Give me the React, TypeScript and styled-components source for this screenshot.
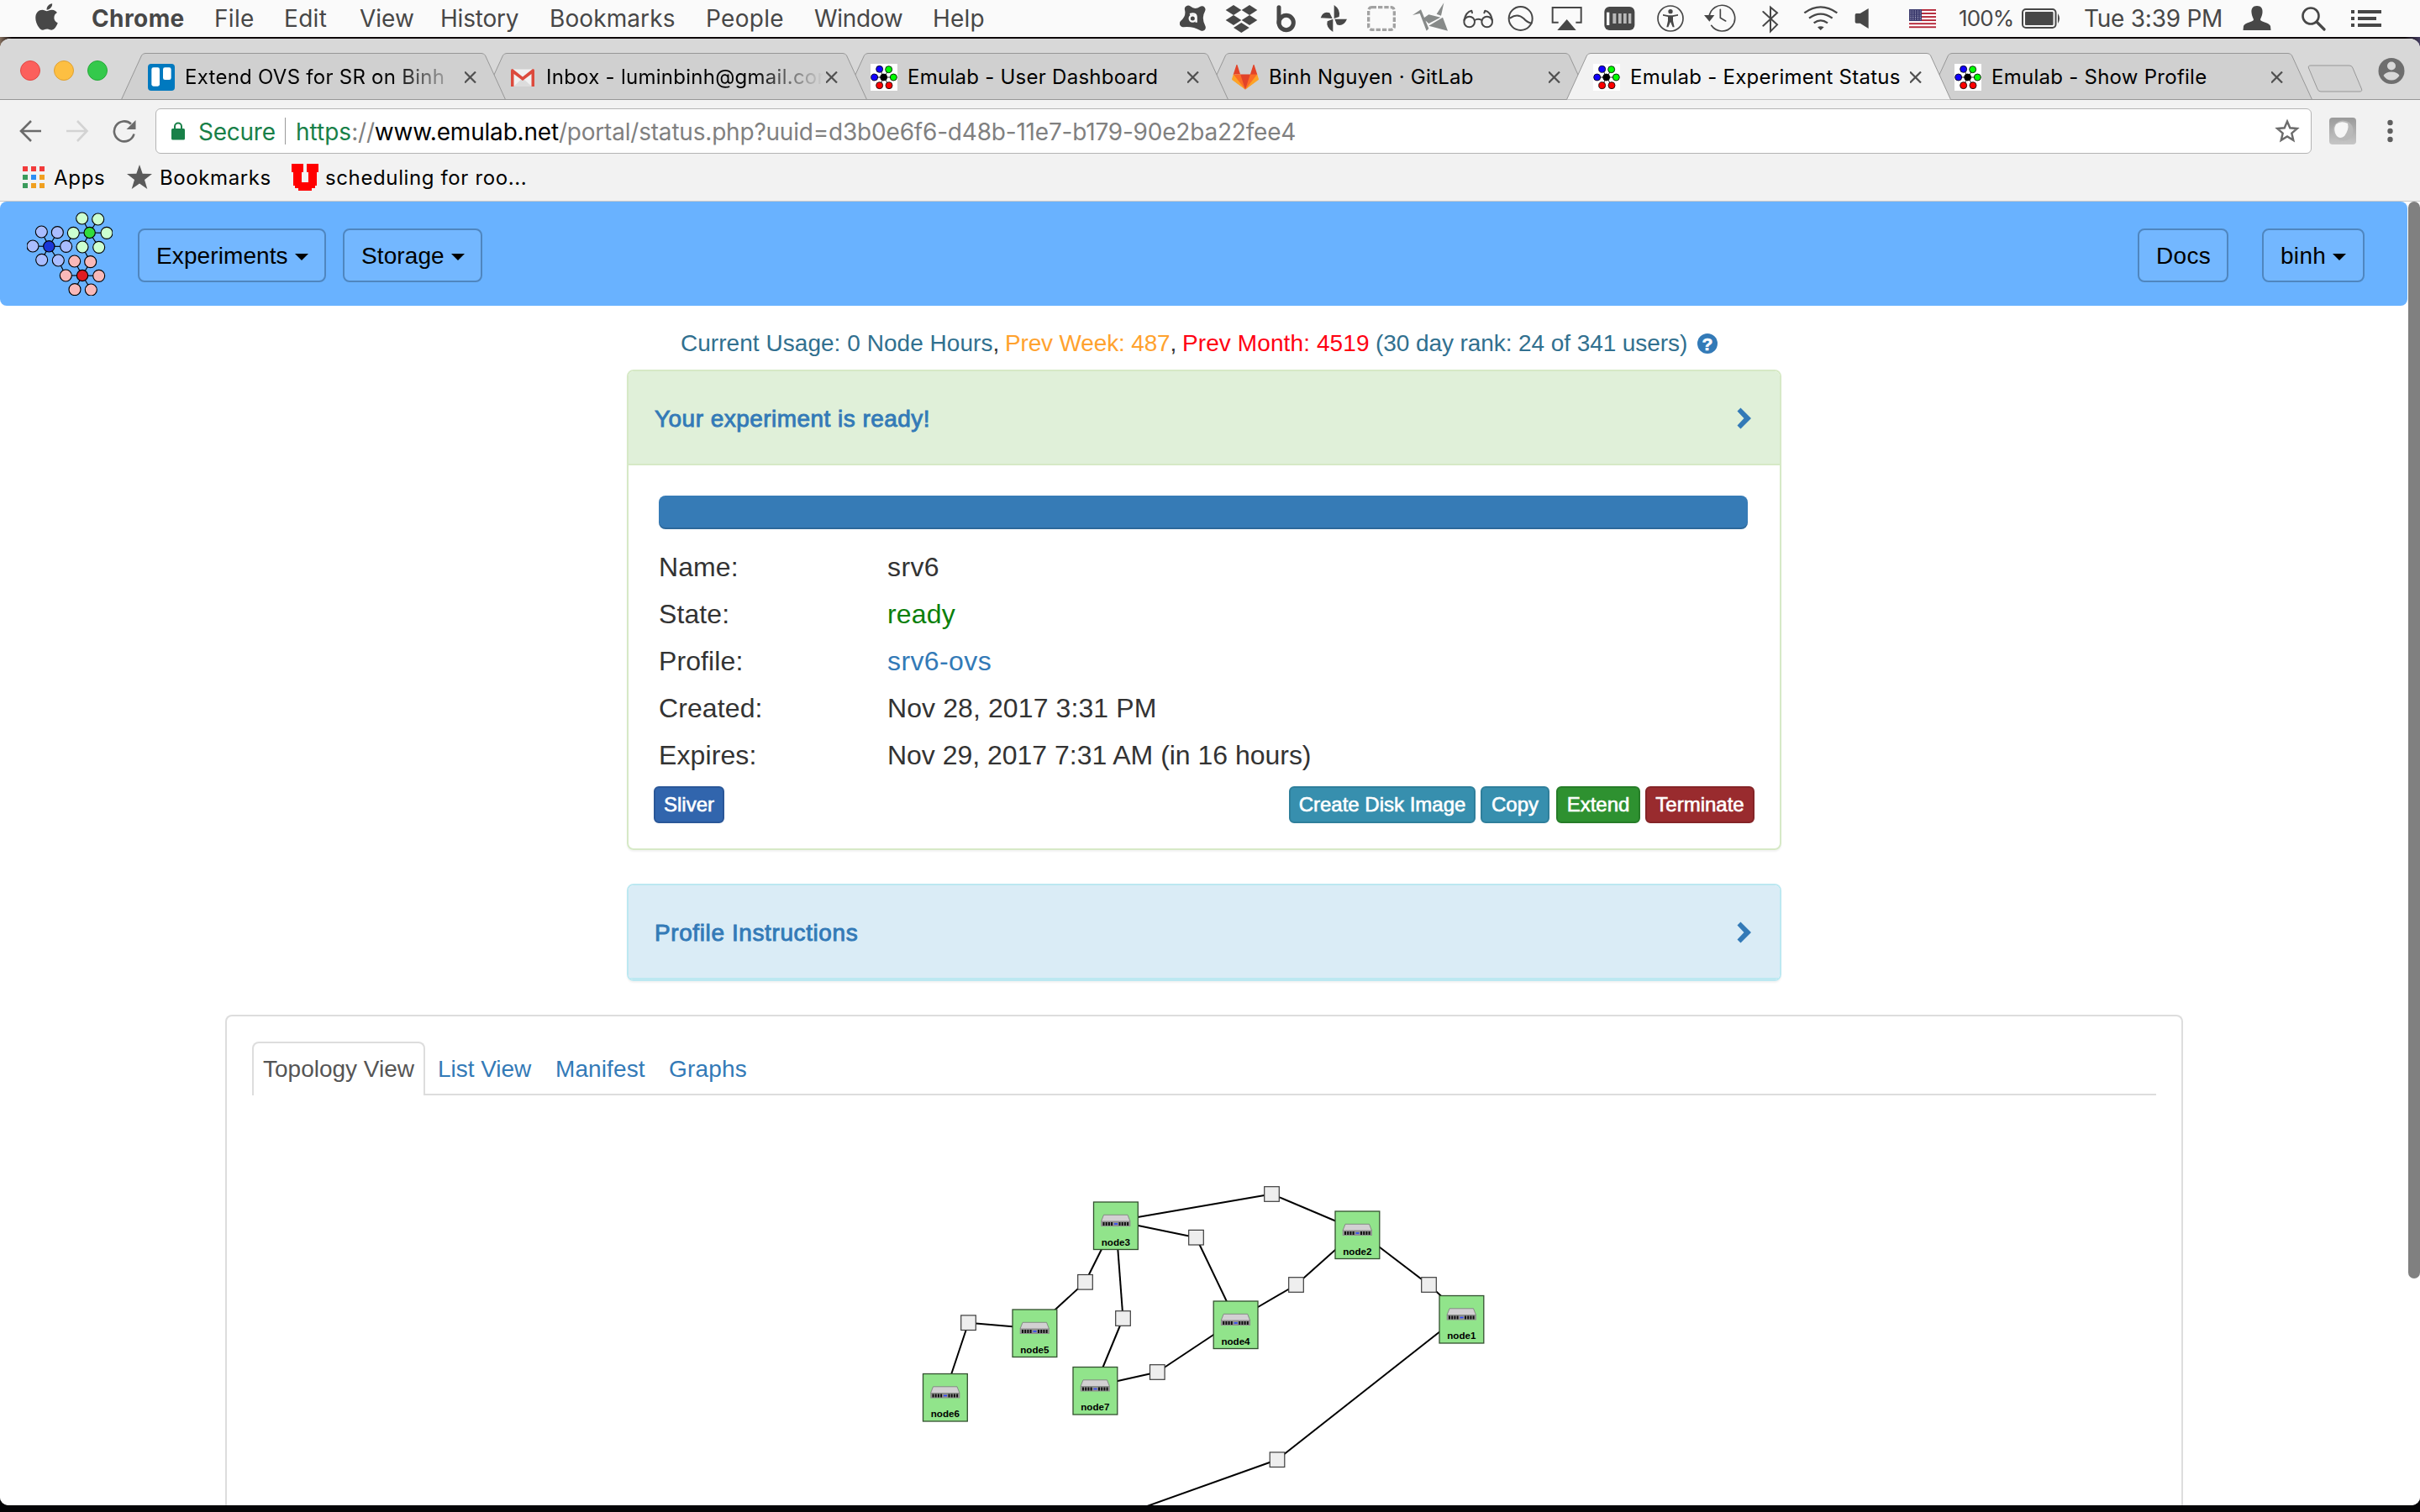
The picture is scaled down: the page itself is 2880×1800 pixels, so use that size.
import React from "react";
import styled, { createGlobalStyle, css } from "styled-components";
import { FaApple } from "react-icons/fa";

const Global = createGlobalStyle`
  * { box-sizing: border-box; }
  html, body { margin: 0; padding: 0; background: #050507; }
  body { width: 2880px; height: 1800px; overflow: hidden; }
  svg { display: block; flex: none; }
`;

const ui = `Inter, Roboto, "Liberation Sans", sans-serif`;
const page = `"Liberation Sans", Arial, Helvetica, sans-serif`;
const ink = "#474747";

/* ---------- desktop ---------- */

const Desktop = styled.div`
  display: flex;
  flex-direction: column;
  width: 2880px;
  height: 1800px;
  padding-bottom: 8px;
  overflow: hidden;
  background: linear-gradient(90deg, #85705f 0, #0c0608 14px, #0c0608 2862px, #453d60 2880px) 0 44px / 100% 20px no-repeat, #050507;
`;

const MenuBar = styled.header`
  flex: none;
  display: flex;
  align-items: center;
  height: 44px;
  margin-bottom: 2px;
  background: #fafafa;
  color: ${ink};
  font: 28px/44px ${ui};
`;

const AppleMark = styled(FaApple)`
  width: 27px;
  height: 36px;
  margin: 0 40px 4px 42px;
  flex: none;
`;

const MenuItem = styled.span<{ $w: number; $bold?: boolean; $ls?: number }>`
  flex: none;
  width: ${(p) => p.$w}px;
  height: 44px;
  white-space: nowrap;
  letter-spacing: ${(p) => p.$ls ?? 0}px;
  font-weight: ${(p) => (p.$bold ? 700 : 400)};
`;

const StatusIcon = styled.svg<{ $gap: number }>`
  margin-left: ${(p) => p.$gap}px;
  height: 44px;
`;

const StatusText = styled.span<{ $gap: number; $w: number; $size: number; $ls: number }>`
  flex: none;
  margin-left: ${(p) => p.$gap}px;
  width: ${(p) => p.$w}px;
  font-size: ${(p) => p.$size}px;
  letter-spacing: ${(p) => p.$ls}px;
  white-space: nowrap;
`;

/* ---------- browser window ---------- */

const BrowserWindow = styled.div`
  flex: 1;
  min-height: 0;
  display: flex;
  flex-direction: column;
  border-radius: 12px 12px 10px 10px;
  overflow: hidden;
  background: #fff;
`;

const TabStrip = styled.div`
  flex: none;
  display: flex;
  align-items: flex-end;
  height: 73px;
  background: #d8d8d8;
  box-shadow: inset 0 -1px 0 #979797;
`;

const Lights = styled.div`
  display: flex;
  gap: 16px;
  width: 144px;
  padding: 0 0 23px 24px;
`;

const Light = styled.i<{ $fill: string; $edge: string }>`
  width: 24px;
  height: 24px;
  border-radius: 50%;
  background: ${(p) => p.$fill};
  border: 1px solid ${(p) => p.$edge};
`;

const TabBox = styled.div<{ $z: number }>`
  position: relative;
  z-index: ${(p) => p.$z};
  flex: none;
  display: flex;
  align-items: center;
  width: 458px;
  height: 56px;
  margin-right: -28px;
  padding: 1px 0 0 32px;
`;

const TabShape = styled.svg`
  position: absolute;
  left: 0;
  top: 0;
  z-index: -1;
`;

const TabTitle = styled.span<{ $fade?: boolean }>`
  flex: none;
  width: 355px;
  margin: 0 -22px 0 12px;
  overflow: hidden;
  white-space: nowrap;
  color: #000;
  font: 24px/36px ${ui};
  letter-spacing: 0.26px;
  ${(p) => p.$fade && css`mask-image: linear-gradient(90deg, #000 247px, transparent 330px);`}
`;

const Toolbar = styled.div`
  flex: none;
  display: flex;
  align-items: center;
  height: 74px;
  padding-left: 23px;
  background: #f2f2f2;
`;

const NavIcon = styled.svg<{ $gap?: number }>`
  margin-left: ${(p) => p.$gap ?? 0}px;
`;

const AddressBar = styled.div`
  flex: none;
  display: flex;
  align-items: center;
  width: 2566px;
  height: 54px;
  margin-left: 23px;
  padding-left: 18px;
  border: 1px solid #b4b4b4;
  border-radius: 6px;
  background: #fff;
  font: 28px/32px ${ui};
`;

const Secure = styled.span`
  width: 103px;
  margin: 2px 0 0 16px;
  letter-spacing: -0.25px;
  color: #188048;
`;

const Divider = styled.i`
  width: 1px;
  height: 32px;
  background: #9b9b9b;
`;

const Url = styled.span`
  flex: 1;
  margin: 2px 0 0 12px;
  letter-spacing: -0.2px;
  color: #808080;
  white-space: nowrap;
  b { font-weight: 400; color: #000; }
  em { font-style: normal; color: #188048; letter-spacing: 0; }
`;

const BookmarksBar = styled.div`
  flex: none;
  display: flex;
  align-items: center;
  height: 47px;
  padding: 0 0 11px 27px;
  background: #f2f2f2;
  border-bottom: 1px solid #c9c9c9;
  color: #000;
  font: 24px/32px ${ui};
`;

const Bookmark = styled.span<{ $w: number; $gap: number; $ls: number }>`
  flex: none;
  width: ${(p) => p.$w}px;
  margin: 3px 0 0 ${(p) => p.$gap}px;
  letter-spacing: ${(p) => p.$ls}px;
  white-space: nowrap;
`;

/* ---------- web page ---------- */

const Viewport = styled.div`
  flex: 1;
  min-height: 0;
  display: flex;
  background: #fff;
  font-family: ${page};
`;

const Content = styled.main`
  width: 2866px;
  display: flex;
  flex-direction: column;
`;

const ScrollThumb = styled.div`
  width: 14px;
  height: 1282px;
  border-radius: 7px;
  background: #808080;
`;

const NavBar = styled.nav`
  flex: none;
  display: flex;
  align-items: center;
  height: 124px;
  width: 2865px;
  padding: 4px 51px 0 32px;
  border-radius: 8px;
  background: #69b2ff;
`;

const Logo = styled.svg`
  margin-bottom: 4px;
`;

const NavButton = styled.button<{ $w: number; $gap: string; $ls?: number }>`
  display: flex;
  align-items: center;
  gap: 8px;
  width: ${(p) => p.$w}px;
  height: 64px;
  margin-left: ${(p) => p.$gap};
  padding: 1px 0 0 20px;
  border: 2px solid #4f86bf;
  border-radius: 8px;
  background: #73b7ff;
  color: #000;
  font: 28px/32px ${page};
  letter-spacing: ${(p) => p.$ls ?? 0}px;
`;

const Caret = styled.i`
  margin-top: 3px;
  border: 8px solid transparent;
  border-top-color: #000;
  border-bottom: 0;
`;

const Usage = styled.p`
  flex: none;
  display: flex;
  align-items: center;
  height: 40px;
  margin: 25px 0 11px;
  padding-left: 810px;
  color: #333;
  font-size: 28px;
  line-height: 40px;
  white-space: nowrap;
`;

const UsagePart = styled.span<{ $c: string; $w: number; $ls?: number }>`
  width: ${(p) => p.$w}px;
  color: ${(p) => p.$c};
  letter-spacing: ${(p) => p.$ls ?? 0}px;
  i { font-style: normal; color: #333; }
`;

const HelpBadge = styled.span`
  width: 24px;
  height: 24px;
  border-radius: 50%;
  background: #337ab7;
  color: #fff;
  font: bold 21px/25px ${page};
  text-align: center;
  -webkit-text-stroke: 0.6px #fff;
`;

const Panel = styled.section<{ $edge: string; $h: number }>`
  flex: none;
  width: 1374px;
  height: ${(p) => p.$h}px;
  margin: 0 0 40px 746px;
  border: 2px solid ${(p) => p.$edge};
  border-radius: 8px;
  box-shadow: 0 2px 2px rgba(0, 0, 0, 0.05);
  overflow: hidden;
`;

const PanelHeading = styled.div<{ $bg: string; $edge: string }>`
  display: flex;
  align-items: center;
  justify-content: space-between;
  height: 112px;
  padding: 2px 33px 0 31px;
  background: ${(p) => p.$bg};
  border-bottom: 2px solid ${(p) => p.$edge};
`;

const PanelTitle = styled.h5<{ $ls: number }>`
  margin: 1px 0 0;
  color: #337ab7;
  font: 28px/32px ${page};
  letter-spacing: ${(p) => p.$ls}px;
  -webkit-text-stroke: 0.9px #337ab7;
`;

const Progress = styled.div`
  height: 40px;
  margin: 36px 38px 17px 36px;
  border-radius: 8px;
  background: #367bb6;
  box-shadow: inset 0 -2px 0 rgba(0, 0, 0, 0.15);
`;

const Details = styled.dl`
  display: grid;
  grid-template-columns: 272px 1fr;
  grid-auto-rows: 56px;
  margin: 0;
  padding-left: 36px;
  color: #333;
  font-size: 32px;
  line-height: 56px;
`;

const Term = styled.dt`
  letter-spacing: 0.1px;
`;

const Value = styled.dd<{ $c?: string; $ls?: number }>`
  margin: 0;
  color: ${(p) => p.$c ?? "#333"};
  letter-spacing: ${(p) => p.$ls ?? 0}px;
`;

const Actions = styled.div`
  display: flex;
  margin: 9px 30px 0;
`;

const ActionButton = styled.button<{ $bg: string; $edge: string; $w: number; $gap?: string }>`
  width: ${(p) => p.$w}px;
  height: 44px;
  margin-left: ${(p) => p.$gap ?? "0"};
  padding: 0;
  border: 2px solid ${(p) => p.$edge};
  border-radius: 6px;
  background: ${(p) => p.$bg};
  color: #fff;
  font: 24px/40px ${page};
  white-space: nowrap;
  -webkit-text-stroke: 0.6px #fff;
`;

const TopologyPanel = styled.section`
  flex: 1;
  min-height: 0;
  display: flex;
  flex-direction: column;
  width: 2330px;
  margin-left: 268px;
  border: 2px solid #ddd;
  border-bottom: 0;
  border-radius: 8px 8px 0 0;
`;

const ViewTabs = styled.div`
  flex: none;
  display: flex;
  height: 64px;
  margin: 30px 30px 0;
  box-shadow: inset 0 -2px 0 #ddd;
`;

const ViewTab = styled.a<{ $w: number; $active?: boolean; $ls?: number }>`
  width: ${(p) => p.$w}px;
  padding-left: 13px;
  color: #337ab7;
  border: 2px solid transparent;
  font-size: 28px;
  line-height: 61px;
  letter-spacing: ${(p) => p.$ls ?? 0}px;
  white-space: nowrap;
  ${(p) =>
    p.$active &&
    css`
      padding-left: 11px;
      color: #555;
      background: #fff;
      border-color: #ddd #ddd transparent;
      border-bottom: 0;
      border-radius: 8px 8px 0 0;
    `}
`;

/* ---------- drawings ---------- */

const menus = [
  { t: "Chrome", w: 146, bold: true, ls: 0.4 },
  { t: "File", w: 83, ls: 0.3 },
  { t: "Edit", w: 90, ls: 0.3 },
  { t: "View", w: 96, ls: 0 },
  { t: "History", w: 130, ls: -0.2 },
  { t: "Bookmarks", w: 186, ls: 0.1 },
  { t: "People", w: 129, ls: 0.3 },
  { t: "Window", w: 141, ls: -0.3 },
  { t: "Help", w: 294, ls: 0.2 },
];

/* Status icons are drawn at three units per pixel, 132 units tall. */
const Icon = ({ gap, x, w, children }: { gap: number; x: number; w: number; children: React.ReactNode }) => (
  <StatusIcon $gap={gap} width={w / 3} viewBox={`${x} 0 ${w} 132`} fill={ink} stroke="none">
    {children}
  </StatusIcon>
);

const outline = { fill: "none", stroke: ink, strokeLinecap: "round" as const, strokeLinejoin: "round" as const };

const StatusIcons = () => (
  <>
    <Icon gap={0} x={42} w={99}>
      <path d="M72 32Q95 52 121 34Q104 64 122 98Q92 80 54 84Q80 62 72 32Z" stroke={ink} strokeWidth="25" strokeLinejoin="round" />
      <circle cx="88" cy="66" r="11" fill="none" stroke="#fafafa" strokeWidth="7" />
      <path d="M78 51Q101 44 101 62V80" fill="none" stroke="#fafafa" strokeWidth="7" />
    </Icon>
    <Icon gap={21} x={206} w={117}>
      {[[236, 36], [293, 36], [236, 72], [293, 72], [264, 99]].map(([x, y]) => (
        <path key={`${x}${y}`} d={`M${x - 28} ${y}L${x} ${y - 18}L${x + 28} ${y}L${x} ${y + 18}Z`} />
      ))}
    </Icon>
    <Icon gap={22} x={388} w={72}>
      <circle cx="423" cy="81" r="26" {...outline} strokeWidth="15" />
      <path d="M397 26V82" {...outline} strokeWidth="15" />
    </Icon>
    <Icon gap={28} x={546} w={99}>
      <path d="M596 18Q620 34 614 60L596 66ZM548 64Q556 38 580 46L590 66ZM592 114Q566 98 572 76L592 68ZM642 68Q630 96 606 88L598 68Z" />
    </Icon>
    <Icon gap={22} x={711} w={108}>
      <rect x="719" y="26" width="92" height="80" rx="12" fill="none" stroke="#a2a2a2" strokeWidth="10" strokeDasharray="16 6" />
    </Icon>
    <Icon gap={19} x={876} w={126}>
      <path d="M876 54L906 34L934 102L926 110L902 48ZM988 10L962 50L978 56ZM914 66L934 52L976 62L934 84ZM934 92L984 62L1002 110Z" fill="#878a89" />
    </Icon>
    <Icon gap={17} x={1054} w={117}>
      <g {...outline} strokeWidth="6">
        <circle cx="1080" cy="78" r="19" />
        <circle cx="1143" cy="78" r="19" />
        <path d="M1099 72Q1111 64 1124 72M1061 72Q1068 42 1088 38L1090 46M1162 72Q1156 42 1136 38L1133 46" />
      </g>
    </Icon>
    <Icon gap={15} x={1216} w={96}>
      <g {...outline} strokeWidth="6">
        <circle cx="1263" cy="66" r="42" />
        <path d="M1226 64Q1252 46 1274 66Q1286 80 1302 83" />
      </g>
    </Icon>
    <Icon gap={20} x={1372} w={114}>
      <path d="M1398 80H1377V27H1479V80H1460" {...outline} strokeLinecap="butt" strokeLinejoin="miter" strokeWidth="6" />
      <path d="M1428 69L1461 108H1394Z" />
    </Icon>
    <Icon gap={25} x={-1} w={111}>
      <rect x="0" y="24" width="108" height="84" rx="18" />
      <path d="M8 44H18V90H8Z" fill="#fafafa" />
      <path d="M30 48H42V84H30ZM50 48H61V84H50ZM68 48H79V84H68ZM86 48H96V84H86Z" fill="#b8b8b8" />
    </Icon>
    <Icon gap={26} x={186} w={99}>
      <circle cx="234" cy="66" r="45" {...outline} strokeWidth="5" />
      <circle cx="234" cy="41" r="8" />
      <path d="M207 51L227 55H241L261 51V56L243 60V74L248 97H242L234 78L226 97H220L225 74V60L207 56Z" />
    </Icon>
    <Icon gap={23} x={354} w={114}>
      <path d="M372 62A46 46 0 1 1 380 91" {...outline} strokeWidth="5" />
      <path d="M354 54H391L373 77Z" />
      <path d="M412 34V64L431 75" {...outline} strokeWidth="5" />
    </Icon>
    <Icon gap={31} x={562} w={60}>
      <path d="M566 42L616 88L592 112V26L616 46L566 92" {...outline} strokeLinejoin="miter" strokeWidth="6" />
    </Icon>
    <Icon gap={29} x={708} w={126}>
      <path d="M712 46Q770 4 829 46M729 65Q770 35 812 65M746 82Q770 64 795 82" {...outline} strokeLinecap="butt" strokeWidth="7" />
      <path d="M759 97Q770 90 782 97L770 108Z" />
    </Icon>
    <Icon gap={19} x={892} w={54}>
      <path d="M899 48H912L942 30V102L912 83H899Q894 83 894 78V53Q894 48 899 48Z" />
    </Icon>
    <Icon gap={47} x={1086} w={96}>
      <path d="M1086 33H1182V99H1086Z" fill="#fff" />
      {[0, 1, 2, 3, 4, 5].map((i) => (
        <path key={i} d={`M1086 ${33 + i * 12.2}h96v5.6h-96Z`} fill="#b22234" />
      ))}
      <path d="M1086 33H1131V75H1086Z" fill="#3c3b6e" />
      {[0, 1, 2, 3, 4].map((r) =>
        [0, 1, 2, 3, 4].map((c) => <circle key={`${r}${c}`} cx={1092 + c * 8.4} cy={39 + r * 7.4} r="1.6" fill="#d8d8e8" />),
      )}
    </Icon>
    <StatusText $gap={27} $w={65} $size={26} $ls={-0.9}>100%</StatusText>
    <StatusIcon $gap={10} width="47" viewBox="0 0 47 44" fill={ink}>
      <rect x="1" y="11" width="39.5" height="22" rx="4" fill="none" stroke={ink} strokeWidth="2" />
      <rect x="4" y="14" width="33.5" height="16" rx="1" />
      <path d="M43 16Q47 22 43 28Z" />
    </StatusIcon>
    <StatusText $gap={27} $w={166} $size={28} $ls={-0.25}>Tue 3:39 PM</StatusText>
    <StatusIcon $gap={23} width="34" viewBox="0 0 34 44" fill={ink}>
      <path d="M17 7C12 7 10 10.500 10.500 15C11 19.500 12.500 21 13 23.500C12.500 26 2 27 1 31L0.500 36H33.500L33 31C32 27 21.500 26 21 23.500C21.500 21 23 19.500 23.500 15C24 10.500 22 7 17 7Z" />
    </StatusIcon>
    <StatusIcon $gap={36} width="29" viewBox="0 0 29 44" {...outline} strokeWidth="2.6">
      <circle cx="11" cy="19" r="9.500" />
      <path d="M18 26L27 35" strokeWidth="3.200" />
    </StatusIcon>
    <StatusIcon $gap={30} width="38" viewBox="0 0 38 44" fill={ink}>
      <path d="M0 12H4V16H0ZM8 12H36V16H8ZM0 20H4V24H0ZM8 20H30V24H8ZM0 28H4V32H0ZM8 28H36V32H8Z" />
    </StatusIcon>
  </>
);

const TrelloIcon = () => (
  <svg width="32" height="32" viewBox="0 0 96 96">
    <rect width="96" height="96" rx="12" fill="#0079bf" />
    <rect x="13" y="13" width="29" height="67" rx="7" fill="#fff" />
    <rect x="54" y="13" width="29" height="44" rx="7" fill="#fff" />
  </svg>
);

const GmailIcon = () => (
  <svg width="32" height="32" viewBox="0 0 32 32">
    <path d="M3 6.500H29V27H3Z" fill="#f1f1f1" />
    <path d="M16 17L5 27H27Z" fill="#dcdcdc" />
    <path d="M2 8Q2 6 4 6L16 15.500L28 6Q30 6 30 8V27H26.500V12L16 20L5.500 12V27H2Z" fill="#dc4a3d" />
  </svg>
);

const GitLabIcon = () => (
  <svg width="32" height="32" viewBox="0 0 36 36">
    <path d="M2 14l9.380 9v-9l-4-12.280c-.205-.632-1.176-.632-1.380 0zM34 14l-9.380 9v-9l4-12.280c.205-.632 1.176-.632 1.380 0zM18 34.380L3 14H33Z" fill="#e24329" />
    <path d="M18 34.380L11.380 14H2L6 25ZM18 34.380L24.620 14H34L30 25Z" fill="#fc6d26" />
    <path d="M2 14L.1 20.160c-.18.565 0 1.200.5 1.560L18 34.380zM34 14l1.900 6.160c.18.565 0 1.200-.5 1.560L18 34.380z" fill="#fca326" />
  </svg>
);

const EmulabIcon = () => (
  <svg width="32" height="32" viewBox="0 0 96 96" stroke="#000" strokeWidth="2.500">
    <path d="M0 0H96V96H0Z" fill="#fff" stroke="none" />
    <path d="M14 48H82M32 19L65 77M65 20L32 77" />
    <circle cx="32" cy="19" r="12" fill="#10f" />
    <circle cx="14" cy="48" r="12" fill="#10f" />
    <circle cx="65" cy="20" r="12" fill="#0f0" />
    <circle cx="82" cy="48" r="12" fill="#0f0" />
    <circle cx="32" cy="77" r="12" fill="#f00" />
    <circle cx="66" cy="77" r="12" fill="#f00" />
    <circle cx="47" cy="48" r="12" fill="#000" />
  </svg>
);

const tabs = [
  { icon: <TrelloIcon />, title: "Extend OVS for SR on Binh", fade: true },
  { icon: <GmailIcon />, title: "Inbox - luminbinh@gmail.com", fade: true },
  { icon: <EmulabIcon />, title: "Emulab - User Dashboard" },
  { icon: <GitLabIcon />, title: "Binh Nguyen · GitLab" },
  { icon: <EmulabIcon />, title: "Emulab - Experiment Status", active: true },
  { icon: <EmulabIcon />, title: "Emulab - Show Profile" },
];

const BrowserTab = ({ icon, title, fade, active, z }: { icon: React.ReactNode; title: string; fade?: boolean; active?: boolean; z: number }) => (
  <TabBox $z={z}>
    <TabShape width="458" height="56" fill={active ? "#f2f2f2" : "#d0d0d0"} stroke="#979797">
      <path d="M0.500 55.500L24.500 3Q26 .5 29 .5H429Q432 .5 433.500 3L457.500 55.500" />
      {active ? null : <path d="M0 55.500H458" />}
    </TabShape>
    {icon}
    <TabTitle $fade={fade}>{title}</TabTitle>
    <svg width="14" height="14" viewBox="0 0 14 14" stroke="#4f4f4f" strokeWidth="2.200">
      <path d="M0 0.500L13 13.500M13 0.500L0 13.500" />
    </svg>
  </TabBox>
);

const EmulabLogo = () => {
  const clusters = [
    { core: "#1a36d8", leaf: "#a9bdff", at: [175, 820], leaves: [[148, 768], [205, 770], [117, 819], [236, 820], [149, 868], [208, 870]] },
    { core: "#32dc3c", leaf: "#ccffd0", at: [320, 771], leaves: [[293, 720], [350, 723], [262, 772], [381, 772], [294, 822], [353, 823]] },
    { core: "#e01b22", leaf: "#f9b9b9", at: [294, 924], leaves: [[266, 873], [323, 875], [235, 924], [353, 925], [267, 974], [325, 975]] },
  ];
  return (
    <Logo width="102" height="100" viewBox="96 696 306 300" stroke="#000" strokeWidth="3.4">
      <path d="M236 820L262 772M208 870L235 924M294 822L323 875" />
      {clusters.map((c) => (
        <g key={c.core}>
          {c.leaves.map(([x, y]) => <path key={`l${x}${y}`} d={`M${c.at[0]} ${c.at[1]}L${x} ${y}`} />)}
          {c.leaves.map(([x, y]) => <circle key={`c${x}${y}`} cx={x} cy={y} r="21" fill={c.leaf} />)}
          <circle cx={c.at[0]} cy={c.at[1]} r="20" fill={c.core} />
        </g>
      ))}
    </Logo>
  );
};

const Chevron = () => (
  <svg width="18" height="26" viewBox="0 0 18 26">
    <path d="M4.500 .5L17 13L4.500 25.500L.5 21.500L8.500 13L.5 4.500Z" fill="#337ab7" />
  </svg>
);

/* ---------- topology ---------- */

const nodes = [
  { name: "node3", x: 1301, y: 1430.5 },
  { name: "node2", x: 1588.5, y: 1441.5 },
  { name: "node1", x: 1712.5, y: 1542 },
  { name: "node4", x: 1443.7, y: 1548.5 },
  { name: "node5", x: 1204.5, y: 1558.5 },
  { name: "node6", x: 1098, y: 1635 },
  { name: "node7", x: 1276.5, y: 1627 },
];

const links = [
  { x: 1513.5, y: 1421.5, ends: ["node3", "node2"] },
  { x: 1423.5, y: 1473.2, ends: ["node3", "node4"] },
  { x: 1291.5, y: 1526.3, ends: ["node3", "node5"] },
  { x: 1336.5, y: 1569.5, ends: ["node3", "node7"] },
  { x: 1542.5, y: 1529.5, ends: ["node2", "node4"] },
  { x: 1700.5, y: 1529.5, ends: ["node2", "node1"] },
  { x: 1152.5, y: 1574.7, ends: ["node5", "node6"] },
  { x: 1377.3, y: 1633.5, ends: ["node7", "node4"] },
  { x: 1520, y: 1737.7, ends: ["node1"] },
];

const Topology = () => (
  <svg width="2326" height="488" viewBox="270 1304 2326 488">
    <g stroke="#000" strokeWidth="2">
      {links.map((l) =>
        l.ends.map((e) => {
          const n = nodes.find((m) => m.name === e)!;
          return <path key={`${l.x}${e}`} d={`M${l.x} ${l.y}L${n.x + 26.8} ${n.y + 23}`} />;
        }),
      )}
      <path d="M1520 1737.700L1340 1802" />
    </g>
    {links.map((l) => (
      <rect key={l.x} x={l.x - 8.8} y={l.y - 8.8} width="17.600" height="17.600" fill="#eee" stroke="#3c3c3c" strokeWidth="1.200" />
    ))}
    {nodes.map((n) => (
      <g key={n.name} transform={`translate(${n.x} ${n.y})`}>
        <rect x=".5" y=".5" width="52.800" height="56.500" fill="#91e48b" stroke="#33502f" strokeWidth="1.300" />
        <path d="M12.500 15.800H41L44 23.500H9.500Z" fill="#d2d0d2" stroke="#777" strokeWidth=".8" />
        <path d="M9.200 23.500H44.400V29.400H9.200Z" fill="#8f8f8f" />
        <path d="M12.500 24.600v4M15.700 24.600v4M18.900 24.600v4M22.100 24.600v4M31.500 24.600v4M34.700 24.600v4M37.900 24.600v4M41.100 24.600v4" stroke="#0c0c0c" strokeWidth="1.900" />
        <path d="M25 26.500h4" stroke="#2a44ff" strokeWidth="1.600" />
        <text x="26.800" y="52" textAnchor="middle" fontFamily={page} fontSize="11.600" fontWeight="700" fill="#000">{n.name}</text>
      </g>
    ))}
  </svg>
);

export default function App() {
  return (
    <>
      <Global />
      <Desktop>
        <MenuBar>
          <AppleMark />
          {menus.map((m) => (
            <MenuItem key={m.t} $w={m.w} $bold={m.bold} $ls={m.ls}>{m.t}</MenuItem>
          ))}
          <StatusIcons />
        </MenuBar>

        <BrowserWindow>
          <TabStrip>
            <Lights>
              <Light $fill="#fc605c" $edge="#e04844" />
              <Light $fill="#fdbf42" $edge="#dea033" />
              <Light $fill="#34c94b" $edge="#27a83a" />
            </Lights>
            {tabs.map((t, i) => (
              <BrowserTab key={i} {...t} z={t.active ? 10 : 8 - i} />
            ))}
            <NavIcon $gap={22} width="66" height="42" viewBox="0 0 66 42">
              <path d="M4 1H50Q53 1 54 4L64.500 29Q65.500 32 62 32H16Q13 32 12 29L1.500 4Q.5 1 4 1Z" fill="#d3d3d3" stroke="#979797" />
            </NavIcon>
            <NavIcon $gap={18} width="32" height="51" viewBox="0 0 32 51">
              <circle cx="16" cy="16.500" r="15.500" fill="#6e6e6e" />
              <circle cx="16" cy="10.500" r="5" fill="#d8d8d8" />
              <path d="M6.500 22Q9 17.500 16 17.500Q23 17.500 25.500 22Q22 27.500 16 27.500Q10 27.500 6.500 22Z" fill="#d8d8d8" />
            </NavIcon>
          </TabStrip>

          <Toolbar>
            <NavIcon width="27" height="26" viewBox="0 0 27 26" fill="none" stroke="#6b6b6b" strokeWidth="2.600">
              <path d="M26 13H2M14 1L2 13L14 25" />
            </NavIcon>
            <NavIcon $gap={29} width="27" height="26" viewBox="0 0 27 26" fill="none" stroke="#d3d3d3" strokeWidth="2.600">
              <path d="M0 13H24.500M13 1L24.500 13L13 25" />
            </NavIcon>
            <NavIcon $gap={28} width="28" height="28" viewBox="0 0 28 28" fill="none" stroke="#6b6b6b" strokeWidth="2.600">
              <path d="M25.500 17.500A12 12 0 1 1 22 5.500" />
              <path d="M27.500 1V12H16.500Z" fill="#6b6b6b" stroke="none" />
            </NavIcon>
            <AddressBar>
              <svg width="16" height="22" viewBox="0 0 16 22">
                <rect y="8" width="16" height="13.500" rx="1.500" fill="#188048" />
                <path d="M4 9V5.500A4 4 0 0 1 12 5.500V9" fill="none" stroke="#188048" strokeWidth="2" />
              </svg>
              <Secure>Secure</Secure>
              <Divider />
              <Url><em>https</em>://<b>www.emulab.net</b>/portal/status.php?uuid=d3b0e6f6-d48b-11e7-b179-90e2ba22fee4</Url>
              <NavIcon width="30" height="30" viewBox="0 0 30 30" fill="none" stroke="#6b6b6b" strokeWidth="2.400">
                <path d="M15 3.500L18.300 11.300L26.800 12L20.300 17.600L22.300 25.900L15 21.500L7.700 25.900L9.700 17.600L3.200 12L11.700 11.300Z" />
              </NavIcon>
              <NavIcon $gap={12} width="1" height="30" />
            </AddressBar>
            <NavIcon $gap={21} width="32" height="32" viewBox="0 0 32 32">
              <defs>
                <linearGradient id="ext" x2="0" y2="1">
                  <stop stopColor="#9a9a9a" />
                  <stop offset="1" stopColor="#c6c6c6" />
                </linearGradient>
              </defs>
              <rect width="32" height="32" rx="4" fill="url(#ext)" />
              <circle cx="16.500" cy="15.500" r="12" fill="#b9b9b9" />
              <path d="M8 8Q14 3 22 7Q24 14 18 22Q13 26 9 22Q4 15 8 8Z" fill="#f6f6f6" />
            </NavIcon>
            <NavIcon $gap={37} width="7" height="28" viewBox="0 0 7 28" fill="#5f5f5f">
              <circle cx="3.500" cy="4" r="3.200" />
              <circle cx="3.500" cy="14" r="3.200" />
              <circle cx="3.500" cy="24" r="3.200" />
            </NavIcon>
          </Toolbar>

          <BookmarksBar>
            <svg width="27" height="26">
              {["#f23b3b", "#f23b3b", "#f23b3b", "#3a9b5c", "#2c8ef4", "#f0a020", "#3a9b5c", "#f0a020", "#f0a020"].map((c, i) => (
                <rect key={i} x={(i % 3) * 10} y={Math.floor(i / 3) * 10} width="6" height="6" fill={c} />
              ))}
            </svg>
            <Bookmark $w={87} $gap={10} $ls={0.7}>Apps</Bookmark>
            <svg width="30" height="30" viewBox="0 0 30 30">
              <path d="M15 0L18.700 10.800L30 11L21 18L24.300 29L15 22.500L5.700 29L9 18L0 11L11.300 10.800Z" fill="#5a5a5a" />
            </svg>
            <Bookmark $w={157} $gap={9} $ls={0.6}>Bookmarks</Bookmark>
            <svg width="32" height="32" viewBox="1044 525 96 96">
              <path d="M1044 525H1086V555H1080V591H1104V555H1098V525H1140V555H1134V603H1128V612H1116V621H1068V612H1056V603H1050V555H1044Z" fill="#f00" />
            </svg>
            <Bookmark $w={260} $gap={8} $ls={0.62}>scheduling for roo...</Bookmark>
          </BookmarksBar>

          <Viewport>
            <Content>
              <NavBar>
                <EmulabLogo />
                <NavButton $w={224} $gap="30px" $ls={0.1}>Experiments<Caret /></NavButton>
                <NavButton $w={166} $gap="20px" $ls={0.1}>Storage<Caret /></NavButton>
                <NavButton $w={108} $gap="auto" $ls={0.3}>Docs</NavButton>
                <NavButton $w={122} $gap="40px" $ls={0.3}>binh<Caret /></NavButton>
              </NavBar>

              <Usage>
                <UsagePart $c="#31708f" $w={386} $ls={0.04}>Current Usage: 0 Node Hours<i>,</i></UsagePart>
                <UsagePart $c="#ffa22e" $w={211} $ls={-0.16}>Prev Week: 487<i>,</i></UsagePart>
                <UsagePart $c="#ff0012" $w={230} $ls={0.1}>Prev Month: 4519</UsagePart>
                <UsagePart $c="#31708f" $w={383} $ls={-0.08}>(30 day rank: 24 of 341 users)</UsagePart>
                <HelpBadge>?</HelpBadge>
              </Usage>

              <Panel $edge="#d6e9c6" $h={572}>
                <PanelHeading $bg="#e0f0d9" $edge="#d6e9c6">
                  <PanelTitle $ls={0.46}>Your experiment is ready!</PanelTitle>
                  <Chevron />
                </PanelHeading>
                <Progress />
                <Details>
                  <Term>Name:</Term><Value $ls={0.4}>srv6</Value>
                  <Term>State:</Term><Value $c="#0b800b" $ls={0.2}>ready</Value>
                  <Term>Profile:</Term><Value $c="#337ab7" $ls={0.4}>srv6-ovs</Value>
                  <Term>Created:</Term><Value $ls={0.1}>Nov 28, 2017 3:31 PM</Value>
                  <Term>Expires:</Term><Value $ls={-0.02}>Nov 29, 2017 7:31 AM (in 16 hours)</Value>
                </Details>
                <Actions>
                  <ActionButton $bg="#3165ad" $edge="#2a5798" $w={84}>Sliver</ActionButton>
                  <ActionButton $bg="#378fae" $edge="#2f7f9b" $w={222} $gap="auto">Create Disk Image</ActionButton>
                  <ActionButton $bg="#378fae" $edge="#2f7f9b" $w={82} $gap="6px">Copy</ActionButton>
                  <ActionButton $bg="#2e9130" $edge="#267c28" $w={100} $gap="8px">Extend</ActionButton>
                  <ActionButton $bg="#992b2e" $edge="#842427" $w={130} $gap="6px">Terminate</ActionButton>
                </Actions>
              </Panel>

              <Panel $edge="#bce8f1" $h={116}>
                <PanelHeading $bg="#daecf6" $edge="#bce8f1">
                  <PanelTitle $ls={0.6}>Profile Instructions</PanelTitle>
                  <Chevron />
                </PanelHeading>
              </Panel>

              <TopologyPanel>
                <ViewTabs>
                  <ViewTab $w={206} $active>Topology View</ViewTab>
                  <ViewTab $w={140} $ls={-0.04}>List View</ViewTab>
                  <ViewTab $w={135} $ls={0.1}>Manifest</ViewTab>
                  <ViewTab $w={120} $ls={0.2}>Graphs</ViewTab>
                </ViewTabs>
                <Topology />
              </TopologyPanel>
            </Content>
            <ScrollThumb />
          </Viewport>
        </BrowserWindow>
      </Desktop>
    </>
  );
}
